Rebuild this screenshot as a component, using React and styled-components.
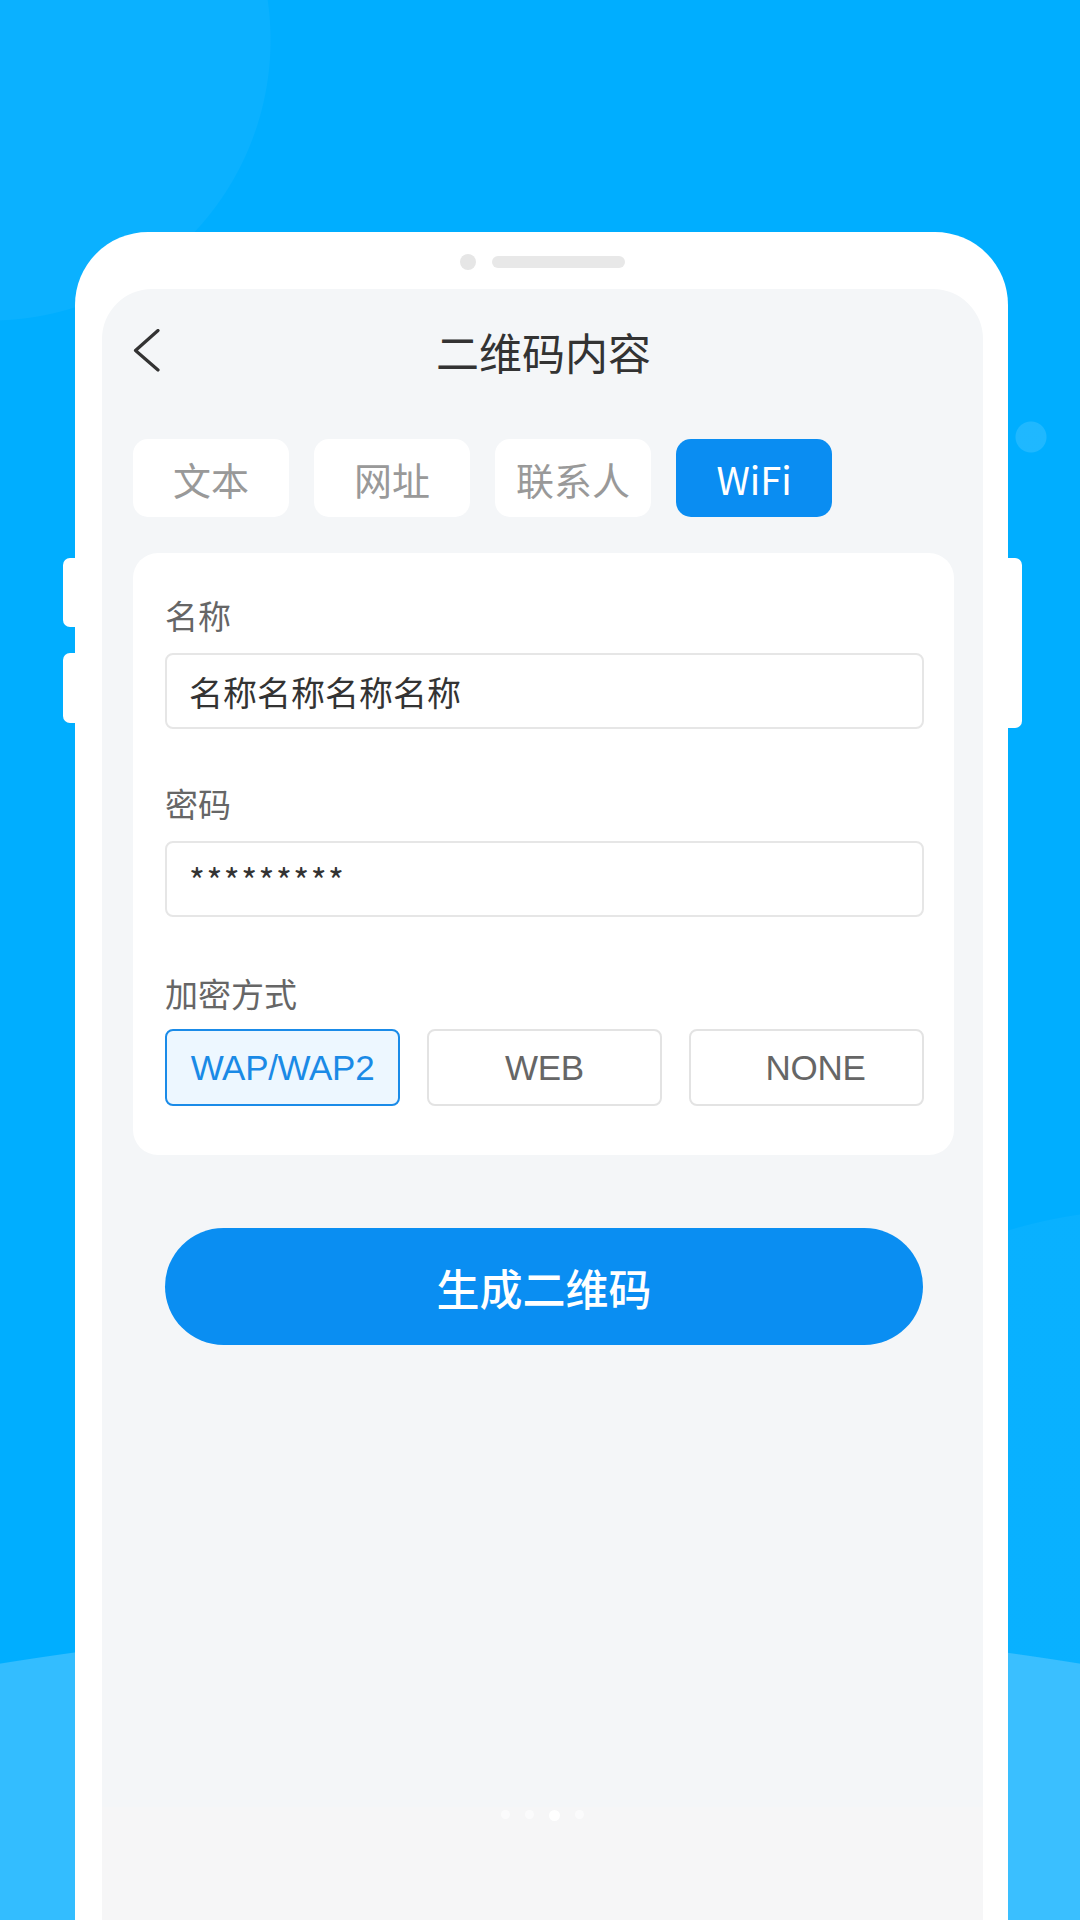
import React from "react";
import styled, { createGlobalStyle } from "styled-components";

const GlobalStyle = createGlobalStyle`
  html, body {
    margin: 0;
    padding: 0;
  }
  body {
    font-family: "Noto Sans CJK SC", "Noto Sans", "Liberation Sans", sans-serif;
  }
  * {
    box-sizing: border-box;
  }
`;

const tabs = ["文本", "网址", "联系人", "WiFi"];
const modes = [
  { name: "WAP/WAP2", shift: 0 },
  { name: "WEB", shift: 0 },
  { name: "NONE", shift: 18 },
];

const App = () => {
  return (
    <Page>
      <GlobalStyle />
      <Phone>
        <SideKey side="left" top={326} height={69} />
        <SideKey side="left" top={421} height={70} />
        <SideKey side="right" top={326} height={170} />

        <Notch>
          <Camera />
          <Speaker />
        </Notch>

        <Screen>
          <Content>
            <Header>
              <BackButton aria-label="返回">
                <svg width="30" height="44" viewBox="0 0 30 44" fill="none">
                  <path
                    d="M25 1.5 L2.5 21.5 L25 41"
                    stroke="#333"
                    strokeWidth="3.2"
                    strokeLinecap="round"
                    strokeLinejoin="round"
                  />
                </svg>
              </BackButton>
              <Title>二维码内容</Title>
              <span />
            </Header>

            <TabRow>
              {tabs.map((t) => (
                <Tab key={t} active={t === "WiFi"}>
                  {t}
                </Tab>
              ))}
            </TabRow>

            <FormCard>
              <Label>名称</Label>
              <InputBox>名称名称名称名称</InputBox>

              <Label gap={55}>密码</Label>
              <InputBox secret>*********</InputBox>

              <Label gap={57}>加密方式</Label>
              <OptionRow>
                {modes.map((m) => (
                  <Option key={m.name} selected={m.name === "WAP/WAP2"} shift={m.shift}>
                    {m.name}
                  </Option>
                ))}
              </OptionRow>
            </FormCard>

            <GenerateButton>生成二维码</GenerateButton>
          </Content>

          <DotsBar>
            <Dot />
            <Dot />
            <Dot active />
            <Dot />
          </DotsBar>
        </Screen>
      </Phone>
    </Page>
  );
};

export default App;

const Page = styled.div`
  width: 1080px;
  height: 1920px;
  overflow: hidden;
  padding-top: 232px;
  background-color: #00aeff;
  background-image:
    radial-gradient(circle at 1031px 437px, rgba(255, 255, 255, 0.12) 0 15px, transparent 16px),
    radial-gradient(circle at -10px 40px, rgba(255, 255, 255, 0.045) 0 280px, transparent 281px),
    radial-gradient(circle at 1150px 1700px, rgba(255, 255, 255, 0.035) 0 490px, transparent 491px),
    radial-gradient(circle at 540px 5021px, #33bdff 0 3400px, transparent 3401px);
`;

const Phone = styled.div`
  position: relative;
  margin-left: 75px;
  width: 933px;
  height: 1688px;
  padding: 0 25px 0 27px;
  background: #ffffff;
  border-radius: 73px 73px 0 0;
  display: flex;
  flex-direction: column;
`;

const SideKey = styled.div`
  position: absolute;
  top: ${(p) => p.top}px;
  height: ${(p) => p.height}px;
  ${(p) => (p.side === "left" ? "left: -12px;" : "right: -14px;")}
  width: ${(p) => (p.side === "left" ? 13 : 15)}px;
  background: #ffffff;
  border-radius: ${(p) => (p.side === "left" ? "7px 0 0 7px" : "0 7px 7px 0")};
`;

const Notch = styled.div`
  height: 57px;
  padding-top: 3px;
  display: flex;
  align-items: center;
  justify-content: center;
  gap: 16px;
`;

const Camera = styled.div`
  width: 16px;
  height: 16px;
  border-radius: 50%;
  background: #e6e6e6;
`;

const Speaker = styled.div`
  width: 133px;
  height: 12px;
  border-radius: 6px;
  background: #e8e8e8;
`;

const Screen = styled.div`
  flex: 1;
  display: flex;
  flex-direction: column;
  background: #f4f6f8;
  border-radius: 50px 50px 0 0;
  overflow: hidden;
`;

const Content = styled.div`
  flex: 1;
  padding: 0 29px 0 31px;
  display: flex;
  flex-direction: column;
`;

const Header = styled.div`
  height: 124px;
  display: grid;
  grid-template-columns: 1fr auto 1fr;
  align-items: center;
`;

const BackButton = styled.div`
  display: flex;
  align-items: center;
  height: 44px;
`;

const Title = styled.div`
  font-size: 43px;
  line-height: 50px;
  color: #333333;
`;

const TabRow = styled.div`
  margin-top: 26px;
  display: flex;
  gap: 25px;
`;

const Tab = styled.div`
  width: 156px;
  height: 78px;
  border-radius: 15px;
  display: flex;
  align-items: center;
  justify-content: center;
  font-size: 38px;
  background: ${(p) => (p.active ? "#0a8df2" : "#ffffff")};
  color: ${(p) => (p.active ? "#ffffff" : "#999999")};
`;

const FormCard = styled.div`
  margin-top: 36px;
  background: #ffffff;
  border-radius: 25px;
  padding: 43px 30px 49px 32px;
  display: flex;
  flex-direction: column;
`;

const Label = styled.div`
  margin-top: ${(p) => p.gap || 0}px;
  font-size: 33px;
  line-height: 38px;
  color: #666666;
`;

const InputBox = styled.div`
  margin-top: 19px;
  height: 76px;
  border: 2px solid #e6e6e6;
  border-radius: 8px;
  padding-left: 22px;
  display: flex;
  align-items: center;
  font-size: 34px;
  color: #333333;
  letter-spacing: ${(p) => (p.secret ? "1.5px" : "0")};
`;

const OptionRow = styled.div`
  margin-top: 17px;
  display: grid;
  grid-template-columns: repeat(3, 1fr);
  gap: 27px;
`;

const Option = styled.div`
  height: 77px;
  border-radius: 8px;
  border: 2px solid ${(p) => (p.selected ? "#1a8be8" : "#e3e3e3")};
  background: ${(p) => (p.selected ? "#edf7ff" : "#ffffff")};
  color: ${(p) => (p.selected ? "#1a8ae6" : "#666666")};
  display: flex;
  align-items: center;
  justify-content: center;
  padding-left: ${(p) => p.shift}px;
  font-family: "Liberation Sans", "Noto Sans CJK SC", sans-serif;
  font-size: 35px;
  letter-spacing: -0.3px;
`;

const GenerateButton = styled.div`
  margin: 73px 31px 0 32px;
  height: 117px;
  border-radius: 59px;
  background: #0a8ef2;
  color: #ffffff;
  font-size: 43px;
  font-weight: 500;
  display: flex;
  align-items: center;
  justify-content: center;
`;

const DotsBar = styled.div`
  height: 113px;
  background: #f6f6f7;
  display: flex;
  justify-content: center;
  align-items: flex-start;
  gap: 15px;
  padding-top: 3px;
`;

const Dot = styled.div`
  width: ${(p) => (p.active ? 11 : 9)}px;
  height: ${(p) => (p.active ? 11 : 9)}px;
  border-radius: 50%;
  background: ${(p) => (p.active ? "#ffffff" : "rgba(255, 255, 255, 0.6)")};
`;
